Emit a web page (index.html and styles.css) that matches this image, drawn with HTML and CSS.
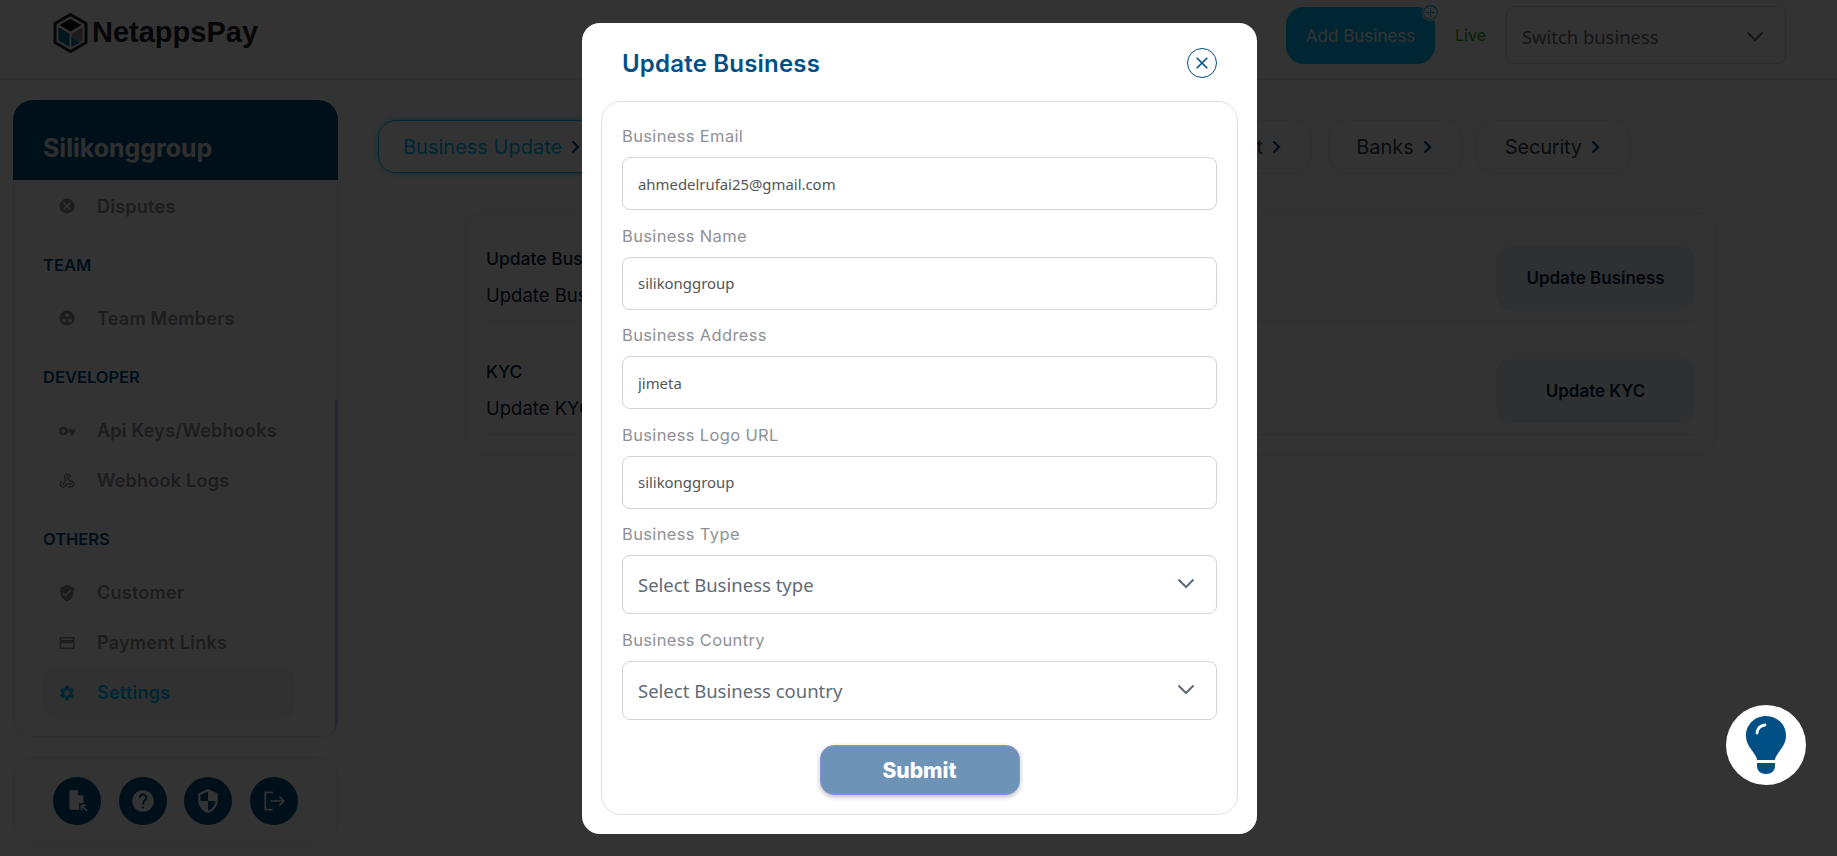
FILE: index.html
```html
<!DOCTYPE html>
<html lang="en">
<head>
    <meta charset="UTF-8">
    <meta name="viewport" content="width=device-width, initial-scale=1.0">
    <title>NetappsPay - Update Business</title>
    <link rel="stylesheet" href="styles.css">
</head>
<body>
    <header class="topbar">
        <a class="logo" href="#">
            <svg class="logo-mark" viewBox="0 0 34 40">
                <path d="M17 1.500 32.500 10.500V29.500L17 38.500 1.500 29.500V10.500Z" fill="#fff" stroke="#222" stroke-width="3"/>
                <path d="M17 6 28 12 17 18.500 6 12Z" fill="#111"/>
                <path d="M5 14 16 20.500V34L5 27.500Z" fill="#0d6d96"/>
                <path d="M18 20.500 29 14V27.500L18 34Z" fill="#8b8b8b"/>
                <path d="M18 24 26 30 18 34Z" fill="#0d6d96"/>
            </svg>
            <span class="logo-text">NetappsPay</span>
        </a>
        <div class="topbar-right">
            <button class="add-business" type="button">
                Add Business
                <svg class="add-badge" viewBox="0 0 16 16">
                    <circle cx="8" cy="8" r="6.500" fill="none" stroke="currentColor"/>
                    <path d="M8 4v8M4 8h8" stroke="currentColor"/>
                </svg>
            </button>
            <span class="live">Live</span>
            <div class="switch-business">
                <span>Switch business</span>
                <svg class="chevron" viewBox="0 0 18 11"><path d="M1.500 1.500 9 9l7.500-7.500" fill="none" stroke="currentColor" stroke-width="2"/></svg>
            </div>
        </div>
    </header>

    <div class="layout">
        <aside class="sidebar">
            <div class="sidebar-card">
                <div class="sidebar-head">Silikonggroup</div>
                <nav class="sidebar-nav">
                    <a class="nav-item first" href="#">
                        <svg viewBox="0 0 24 24"><path d="M12 2C6.470 2 2 6.470 2 12s4.470 10 10 10 10-4.470 10-10S17.530 2 12 2zm5 13.590L15.590 17 12 13.410 8.410 17 7 15.590 10.590 12 7 8.410 8.410 7 12 10.590 15.590 7 17 8.410 13.410 12 17 15.590z"/></svg>
                        Disputes
                    </a>
                    <div class="nav-title">TEAM</div>
                    <a class="nav-item" href="#">
                        <svg viewBox="0 0 24 24"><path d="M12 2C6.48 2 2 6.48 2 12s4.48 10 10 10 10-4.48 10-10S17.52 2 12 2zM8 17.5c-1.38 0-2.5-1.12-2.5-2.5s1.12-2.5 2.5-2.5 2.5 1.12 2.5 2.5-1.12 2.5-2.5 2.5zM9.5 8c0-1.38 1.12-2.5 2.5-2.5s2.5 1.12 2.5 2.5-1.12 2.5-2.5 2.5S9.5 9.38 9.5 8zm6.5 9.5c-1.38 0-2.5-1.12-2.5-2.5s1.12-2.5 2.5-2.5 2.5 1.12 2.5 2.5-1.12 2.5-2.5 2.5z"/></svg>
                        Team Members
                    </a>
                    <div class="nav-title">DEVELOPER</div>
                    <a class="nav-item" href="#">
                        <svg viewBox="0 0 24 24"><path d="M12.65 10C11.83 7.67 9.61 6 7 6c-3.31 0-6 2.69-6 6s2.69 6 6 6c2.61 0 4.83-1.67 5.65-4H17v4h4v-4h2v-4H12.65zM7 14.500c-1.380 0-2.500-1.120-2.500-2.500s1.120-2.500 2.500-2.500 2.500 1.120 2.500 2.500-1.120 2.500-2.500 2.500z"/></svg>
                        Api Keys/Webhooks
                    </a>
                    <a class="nav-item" href="#">
                        <svg viewBox="0 0 24 24"><path d="M10 15h5.88c.27-.31.67-.5 1.12-.5.83 0 1.5.67 1.5 1.5s-.67 1.5-1.5 1.5c-.44 0-.84-.19-1.12-.5H11.9c-.46 2.28-2.48 4-4.9 4-2.76 0-5-2.24-5-5 0-2.42 1.72-4.44 4-4.9v2.07c-1.16.41-2 1.53-2 2.83 0 1.65 1.35 3 3 3s3-1.35 3-3v-1zm2.5-11c1.65 0 3 1.35 3 3h2c0-2.76-2.24-5-5-5s-5 2.24-5 5c0 1.43.6 2.71 1.55 3.62l-2.35 3.9c-.68.14-1.2.75-1.2 1.48 0 .83.67 1.5 1.5 1.5s1.5-.67 1.5-1.5c0-.16-.02-.31-.07-.45l3.38-5.63C10.49 9.61 9.5 8.42 9.5 7c0-1.65 1.35-3 3-3zm4.5 9c-.64 0-1.23.2-1.72.54l-3.05-5.07C11.53 8.35 11 7.74 11 7c0-.83.67-1.5 1.5-1.5S14 6.17 14 7c0 .15-.02.29-.06.43l2.19 3.65c.28-.05.57-.08.87-.08 2.76 0 5 2.24 5 5s-2.24 5-5 5c-1.85 0-3.47-1.01-4.33-2.5h2.67c.48.32 1.05.5 1.66.5 1.65 0 3-1.35 3-3s-1.35-3-3-3z"/></svg>
                        Webhook Logs
                    </a>
                    <div class="nav-title">OTHERS</div>
                    <a class="nav-item" href="#">
                        <svg viewBox="0 0 24 24"><path d="M12 1L3 5v6c0 5.55 3.84 10.74 9 12 5.16-1.26 9-6.45 9-12V5l-9-4zm-2 16l-4-4 1.41-1.41L10 14.17l6.59-6.59L18 9l-8 8z"/></svg>
                        Customer
                    </a>
                    <a class="nav-item" href="#">
                        <svg viewBox="0 0 24 24"><path d="M20 4H4c-1.11 0-1.99.89-1.99 2L2 18c0 1.11.89 2 2 2h16c1.11 0 2-.89 2-2V6c0-1.11-.89-2-2-2zm0 14H4v-6h16v6zm0-10H4V6h16v2z"/></svg>
                        Payment Links
                    </a>
                    <a class="nav-item active" href="#">
                        <svg viewBox="0 0 24 24"><path d="M19.14 12.94c.04-.3.06-.61.06-.94 0-.32-.02-.64-.07-.94l2.03-1.58c.18-.14.23-.41.12-.61l-1.92-3.32c-.12-.22-.37-.29-.59-.22l-2.39.96c-.5-.38-1.03-.7-1.62-.94l-.36-2.54c-.04-.24-.24-.41-.48-.41h-3.84c-.24 0-.43.17-.47.41l-.36 2.54c-.59.24-1.13.57-1.62.94l-2.39-.96c-.22-.08-.47 0-.59.22L2.74 8.87c-.12.21-.08.47.12.61l2.03 1.58c-.05.3-.09.63-.09.94s.02.64.07.94l-2.03 1.58c-.18.14-.23.41-.12.61l1.92 3.32c.12.22.37.29.59.22l2.39-.96c.5.38 1.03.7 1.62.94l.36 2.54c.05.24.24.41.48.41h3.84c.24 0 .44-.17.47-.41l.36-2.54c.59-.24 1.13-.56 1.62-.94l2.39.96c.22.08.47 0 .59-.22l1.92-3.32c.12-.22.07-.47-.12-.61l-2.01-1.58zM12 15.6c-1.98 0-3.6-1.62-3.6-3.6s1.62-3.6 3.6-3.6 3.6 1.62 3.6 3.6-1.62 3.6-3.6 3.6z"/></svg>
                        Settings
                    </a>
                </nav>
                <div class="scroll-thumb"></div>
            </div>
            <div class="sidebar-foot">
                <a class="round-icon" href="#">
                    <svg viewBox="0 0 24 24"><path d="M6 2h7l5 5v7h-4v6H6a1 1 0 0 1-1-1V3a1 1 0 0 1 1-1zM13 2v5h5" /><path d="M16 16v4.500M16 16h4.500M16.300 16.300l5 5" fill="none" stroke="#fff" stroke-width="1.400"/></svg>
                </a>
                <a class="round-icon" href="#">
                    <svg viewBox="0 0 24 24"><path d="M12 2C6.48 2 2 6.48 2 12s4.48 10 10 10 10-4.48 10-10S17.52 2 12 2zm1 17h-2v-2h2v2zm2.07-7.75l-.9.92C13.45 12.9 13 13.5 13 15h-2v-.5c0-1.1.45-2.1 1.17-2.83l1.24-1.26c.37-.36.59-.86.59-1.41 0-1.1-.9-2-2-2s-2 .9-2 2H8c0-2.21 1.79-4 4-4s4 1.79 4 4c0 .88-.36 1.68-.93 2.25z"/></svg>
                </a>
                <a class="round-icon" href="#">
                    <svg viewBox="0 0 24 24"><path d="M12 1L3 5v6c0 5.55 3.84 10.74 9 12 5.16-1.26 9-6.45 9-12V5l-9-4zm0 10.99h7c-.53 4.12-3.28 7.79-7 8.94V12H5V6.3l7-3.11v8.8z"/></svg>
                </a>
                <a class="round-icon" href="#">
                    <svg viewBox="0 0 24 24"><path d="M11 4H4v16h7M9 12h12M17 8l4 4-4 4" fill="none" stroke="#fff" stroke-width="1.600"/></svg>
                </a>
            </div>
        </aside>

        <main class="content">
            <div class="tabs">
                <a class="tab active" href="#">Business Update <svg viewBox="0 0 9 14"><path d="M1.500 1.500 7 7l-5.500 5.500" fill="none" stroke="currentColor" stroke-width="2.400"/></svg></a>
                <a class="tab tab-long" href="#">Account <svg viewBox="0 0 9 14"><path d="M1.500 1.500 7 7l-5.500 5.500" fill="none" stroke="currentColor" stroke-width="2.400"/></svg></a>
                <a class="tab" href="#">Banks <svg viewBox="0 0 9 14"><path d="M1.500 1.500 7 7l-5.500 5.500" fill="none" stroke="currentColor" stroke-width="2.400"/></svg></a>
                <a class="tab tab-security" href="#">Security <svg viewBox="0 0 9 14"><path d="M1.500 1.500 7 7l-5.500 5.500" fill="none" stroke="currentColor" stroke-width="2.400"/></svg></a>
            </div>
            <section class="update-card">
                <div class="update-row">
                    <div>
                        <h3>Update Business</h3>
                        <p>Update Business</p>
                    </div>
                    <button class="update-btn" type="button">Update Business</button>
                </div>
                <div class="update-row second">
                    <div>
                        <h3>KYC</h3>
                        <p>Update KYC</p>
                    </div>
                    <button class="update-btn" type="button">Update KYC</button>
                </div>
            </section>
        </main>
    </div>

    <div class="overlay">
        <div class="modal">
            <div class="modal-head">
                <h2>Update Business</h2>
                <button class="close-btn" type="button">
                    <svg viewBox="0 0 12 12"><path d="M1.500 1.500l9 9M10.500 1.500l-9 9" stroke="currentColor" stroke-width="1.400"/></svg>
                </button>
            </div>
            <form class="modal-form">
                <label for="email">Business Email</label>
                <input id="email" type="text" value="ahmedelrufai25@gmail.com">

                <label for="name">Business Name</label>
                <input id="name" type="text" value="silikonggroup">

                <label for="address">Business Address</label>
                <input id="address" type="text" value="jimeta">

                <label for="logo">Business Logo URL</label>
                <input id="logo" type="text" value="silikonggroup">

                <label for="type">Business Type</label>
                <div class="select-wrap">
                    <select id="type"><option>Select Business type</option></select>
                    <svg viewBox="0 0 18 11"><path d="M1.500 1.500 9 9l7.500-7.500" fill="none" stroke="currentColor" stroke-width="2"/></svg>
                </div>

                <label for="country">Business Country</label>
                <div class="select-wrap">
                    <select id="country"><option>Select Business country</option></select>
                    <svg viewBox="0 0 18 11"><path d="M1.500 1.500 9 9l7.500-7.500" fill="none" stroke="currentColor" stroke-width="2"/></svg>
                </div>

                <button class="submit-btn" type="submit">Submit</button>
            </form>
        </div>
    </div>

    <button class="help-btn" type="button">
        <svg viewBox="0 0 42 60">
            <path d="M21 1C9.800 1 1 9.800 1 20.500c0 6.500 2.800 10.500 6 15 2.300 3.300 4.500 6.200 5.200 9.500h17.600c.7-3.300 2.900-6.200 5.200-9.500 3.200-4.500 6-8.500 6-15C41 9.800 32.200 1 21 1z" fill="#004f85"/>
            <path d="M12 18c.5-4.500 3.500-7.500 8-8" fill="none" stroke="#fff" stroke-width="2.800" stroke-linecap="round"/>
            <path d="M12 48h18v3c0 5-4 8-9 8s-9-3-9-8z" fill="#004f85"/>
        </svg>
    </button>
</body>
</html>
```

FILE: styles.css
```css
* {
    box-sizing: border-box;
}
body {
    font-family: "Inter", "Liberation Sans", sans-serif;
    margin: 0;
    min-height: 100vh;
    background-color: #fff;
    color: #0a2540;
    overflow: hidden;
}
a {
    color: inherit;
    text-decoration: none;
}
h2, h3, p {
    margin: 0;
}

/* top bar */
.topbar {
    display: flex;
    align-items: flex-start;
    height: 80px;
    padding: 6px 51px 0 53px;
    border-bottom: 1px solid #e8e8e8;
}
.logo {
    display: flex;
    align-items: center;
    gap: 4px;
    height: 53px;
}
.logo-mark {
    width: 35px;
    height: 40px;
}
.logo-text {
    font-family: "Liberation Sans", sans-serif;
    font-size: 29px;
    font-weight: 700;
    color: #222;
}
.topbar-right {
    display: flex;
    align-items: center;
    margin-left: auto;
}
.add-business {
    position: relative;
    width: 149px;
    height: 57px;
    margin-top: 1px;
    border: none;
    border-radius: 18px;
    background-color: #00bfff;
    color: #fff;
    font-family: inherit;
    font-size: 17px;
}
.add-badge {
    position: absolute;
    top: -3px;
    right: -4px;
    width: 17px;
    height: 17px;
    color: #00bfff;
    background-color: #fff;
    border-radius: 50%;
}
.live {
    margin: 0 20px;
    font-size: 16px;
    color: #1fa30a;
}
.switch-business {
    display: flex;
    align-items: center;
    justify-content: space-between;
    width: 280px;
    height: 58px;
    padding: 2px 21px 0 15px;
    border: 1px solid #ddd;
    border-radius: 8px;
    font-family: "Noto Sans", sans-serif;
    font-size: 18.4px;
    color: #6a6a6a;
}
.chevron {
    width: 18px;
    height: 11px;
}

/* page body */
.layout {
    display: flex;
    padding: 20px 0 0 13px;
}
.sidebar {
    width: 325px;
    flex-shrink: 0;
}
.sidebar-card {
    position: relative;
    display: flex;
    flex-direction: column;
    height: 637px;
    border-radius: 20px 20px 16px 16px;
    overflow: hidden;
}
.sidebar-head {
    height: 80px;
    flex-shrink: 0;
    padding: 30px 0 0 30px;
    background-color: #004f85;
    color: #eaeaea;
    font-size: 25px;
    font-weight: 700;
    line-height: 36px;
}
.sidebar-nav {
    display: flex;
    flex-direction: column;
    flex: 1;
    padding: 0 29px;
    border: 1px solid #ebebeb;
    border-top: none;
    border-radius: 0 0 16px 16px;
}
.nav-item {
    display: flex;
    align-items: center;
    gap: 21px;
    width: 252px;
    height: 50px;
    flex-shrink: 0;
    padding-left: 15px;
    border-radius: 12px;
    font-size: 18px;
    font-weight: 600;
    letter-spacing: 0.25px;
    color: #909090;
}
.nav-item svg {
    width: 18px;
    height: 18px;
    flex-shrink: 0;
    fill: currentColor;
}
.nav-item.first {
    margin-top: 1px;
}
.nav-item.active {
    background-color: #f5f5f5;
    color: #00bfff;
}
.nav-title {
    margin: 18.5px 0 13.75px;
    height: 30px;
    line-height: 30px;
    font-size: 16.5px;
    font-weight: 600;
    color: #004f85;
}
.scroll-thumb {
    position: absolute;
    right: 0;
    bottom: 0;
    width: 3px;
    height: 337px;
    background-color: #b0c4f0;
}
.sidebar-foot {
    display: flex;
    gap: 17.5px;
    height: 88px;
    margin-top: 20px;
    padding: 19px 0 0 39px;
    border: 1px solid #ebebeb;
    border-radius: 20px;
}
.round-icon {
    display: flex;
    align-items: center;
    justify-content: center;
    width: 48px;
    height: 48px;
    border-radius: 50%;
    background-color: #004f85;
}
.round-icon svg {
    width: 26px;
    height: 26px;
    fill: #fff;
}

/* main content */
.content {
    flex: 1;
    margin-left: 22px;
    margin-right: 17px;
    padding: 19px 0 0 18px;
    border-top: 1px solid #f2f2f2;
}
.tabs {
    display: flex;
    gap: 18px;
}
.tab {
    display: flex;
    align-items: center;
    gap: 9px;
    height: 53px;
    padding: 0 29px 0 26px;
    border: 1px solid #efefef;
    border-radius: 18px;
    box-shadow: 0 0 4px rgba(0, 0, 0, 0.08);
    font-size: 20px;
    color: #333f4d;
}
.tab svg {
    width: 9px;
    height: 14px;
    flex-shrink: 0;
    color: #004f85;
}
.tab.active {
    padding-left: 24px;
    border-color: #00bfff;
    box-shadow: 0 0 6px rgba(0, 191, 255, 0.6);
    color: #00bfff;
}
.tab-long {
    width: 683px;
    justify-content: flex-end;
}
.tab-security {
    margin-left: -4px;
    padding-left: 28px;
    letter-spacing: -0.2px;
}
.update-card {
    width: 1251px;
    height: 243px;
    margin: 39px 0 0 87px;
    padding: 22px 20px 0 20px;
    border: 1px solid #ebebeb;
    border-radius: 16px;
}
.update-row {
    display: flex;
    align-items: flex-start;
    justify-content: space-between;
    height: 87px;
    padding-top: 10px;
    border-bottom: 1px solid #ebebeb;
}
.update-row.second {
    height: 113px;
    padding-top: 36px;
}
.update-row h3 {
    margin-top: 2px;
    font-size: 17.5px;
    font-weight: 500;
    line-height: 24px;
    color: #0a2540;
}
.update-row p {
    margin-top: 12px;
    font-size: 18.5px;
    line-height: 24px;
    color: #0a2540;
}
.update-btn {
    width: 199px;
    height: 65px;
    border: none;
    border-radius: 16px;
    background-color: #e6eff7;
    color: #0a2540;
    font-family: inherit;
    font-size: 17px;
    font-weight: 600;
}

/* modal */
.overlay {
    position: fixed;
    top: 0;
    left: 0;
    right: 0;
    bottom: 0;
    display: flex;
    justify-content: center;
    align-items: flex-start;
    padding: 23px 0 0 2px;
    background-color: rgba(0, 0, 0, 0.8);
}
.modal {
    width: 675px;
    height: 811px;
    padding: 0 19px 20px 19px;
    border-radius: 18px;
    background-color: #fff;
}
.modal-head {
    display: flex;
    justify-content: space-between;
    height: 78px;
    padding: 25px 21px 0 21px;
}
.modal-head h2 {
    font-size: 24px;
    font-weight: 600;
    line-height: 32px;
    letter-spacing: 0.2px;
    color: #004f85;
}
.close-btn {
    display: flex;
    align-items: center;
    justify-content: center;
    width: 30px;
    height: 30px;
    padding: 0;
    border: 1px solid #004f85;
    border-radius: 50%;
    background-color: #fff;
    color: #004f85;
}
.close-btn svg {
    width: 14px;
    height: 14px;
}
.modal-form {
    display: flex;
    flex-direction: column;
    height: 714px;
    padding: 22px 20px 0;
    border: 1px solid #dee2e6;
    border-radius: 20px;
}
.modal-form label {
    height: 24px;
    margin-bottom: 9px;
    font-size: 16.5px;
    line-height: 24px;
    letter-spacing: 0.35px;
    color: #8f9196;
}
.modal-form input,
.modal-form select {
    width: 100%;
    padding: 0 15px;
    border: 1px solid #ced4da;
    border-radius: 8px;
    background-color: #fff;
    font-family: "Noto Sans", sans-serif;
    appearance: none;
    outline: none;
}
.modal-form input {
    flex-shrink: 0;
    height: 53px;
    margin-bottom: 13.5px;
    font-size: 14.9px;
    color: #555;
}
.modal-form select {
    display: block;
    height: 59px;
    font-size: 18.5px;
    color: #5f6b76;
}
.select-wrap {
    position: relative;
    flex-shrink: 0;
    margin-bottom: 13.5px;
}
.select-wrap svg {
    position: absolute;
    top: 23px;
    right: 22px;
    width: 18px;
    height: 11px;
    color: #5f6b76;
    pointer-events: none;
}
.submit-btn {
    flex-shrink: 0;
    align-self: center;
    width: 200px;
    height: 50px;
    margin-top: 12px;
    border: 1px solid #8a93dc;
    border-radius: 14px;
    background-color: #6d93b6;
    box-shadow: 0 2px 5px rgba(0, 0, 0, 0.25);
    color: #fff;
    font-family: inherit;
    font-size: 21px;
    font-weight: 800;
}

/* help bubble */
.help-btn {
    position: fixed;
    top: 705px;
    left: 1726px;
    display: flex;
    align-items: center;
    justify-content: center;
    width: 80px;
    height: 80px;
    padding: 0;
    border: none;
    border-radius: 50%;
    background-color: #fff;
}
.help-btn svg {
    width: 42px;
    height: 60px;
}
```
